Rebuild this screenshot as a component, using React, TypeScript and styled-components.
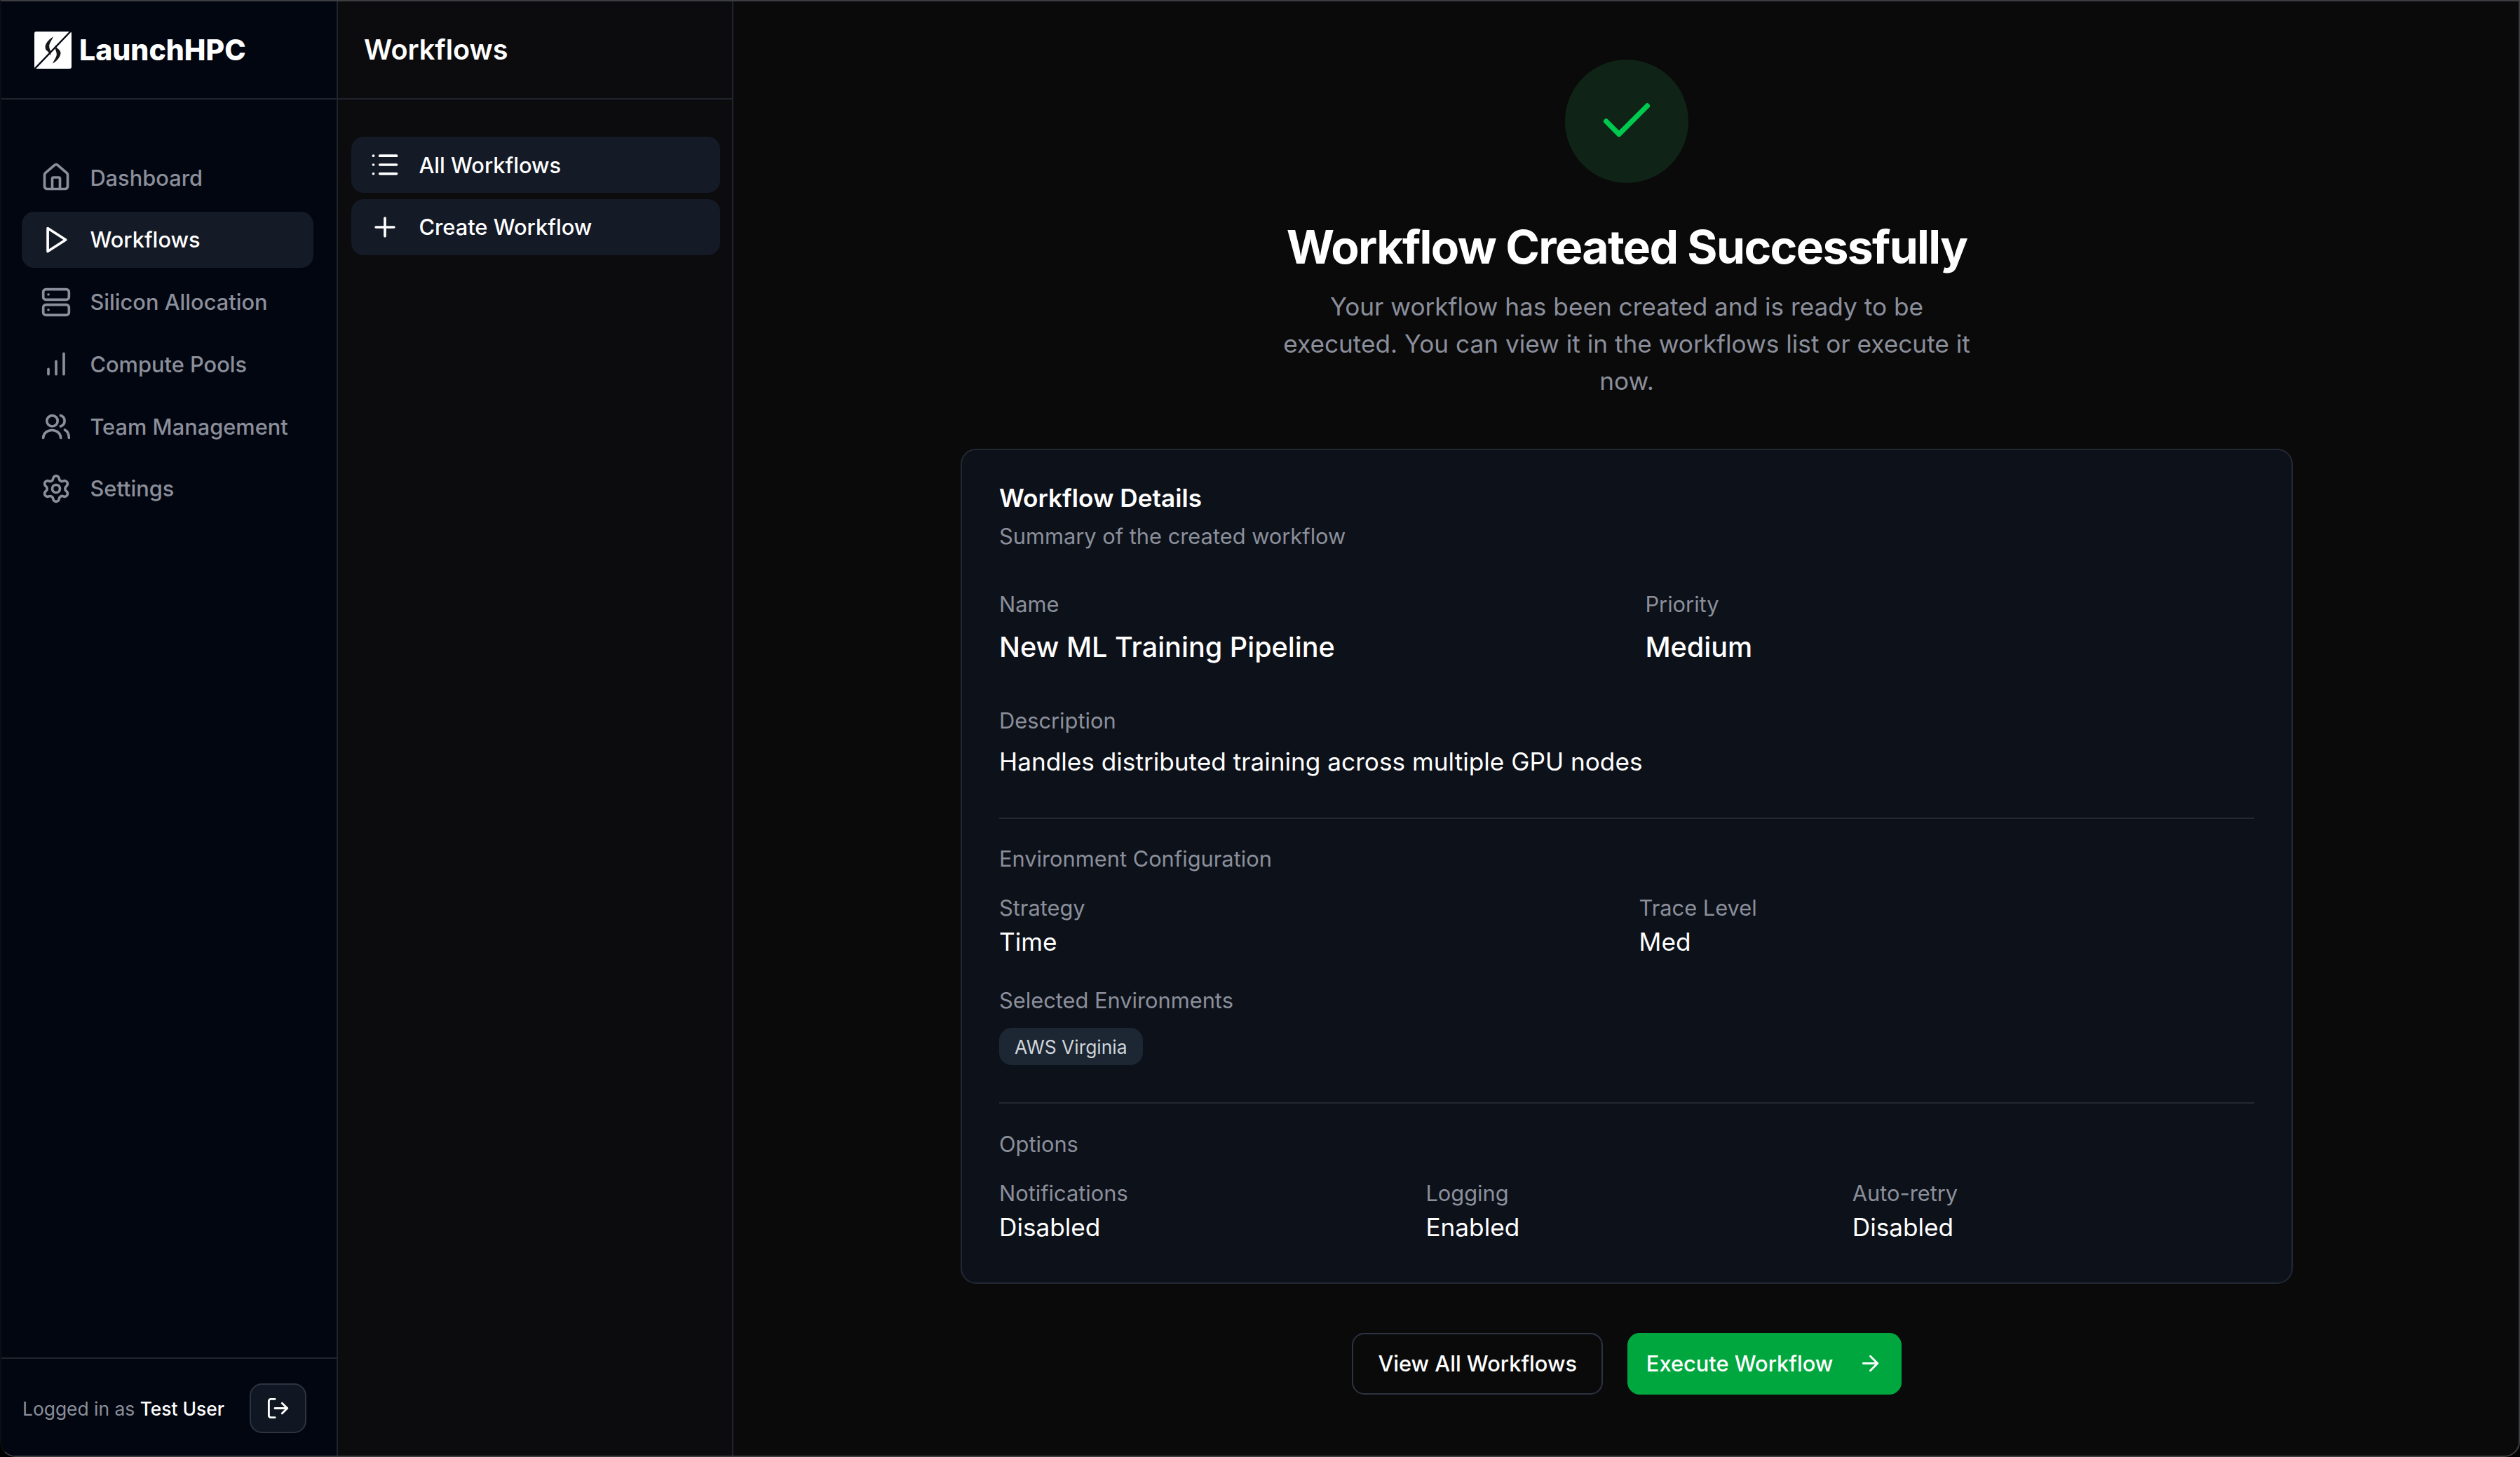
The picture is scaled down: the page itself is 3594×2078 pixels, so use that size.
import React, { FC } from 'react';
import styled, { createGlobalStyle } from 'styled-components';
import { ArrowRight, Check, House, List, LogOut, Plus, Server, Settings } from 'lucide-react';

const muted = '#8b8f9b';

const GlobalStyle = createGlobalStyle`
	html, body {
		margin: 0;
		padding: 0;
		background: #000;
	}
	* {
		box-sizing: border-box;
	}
	body {
		font-family: Inter, "Liberation Sans", sans-serif;
		color: #fff;
	}
`;

const Frame = styled.div`
	display: flex;
	width: 3594px;
	height: 2078px;
	overflow: hidden;
	border: 2px solid #3c3d40;
	border-left-color: #0c0e13;
	border-radius: 0 0 22px 22px;
	background: #0a0a0b;
`;

const Sidebar = styled.aside`
	display: flex;
	flex-direction: column;
	flex: none;
	width: 480px;
	background: #020610;
	border-right: 2px solid #1f242d;
`;

const Brand = styled.div`
	display: flex;
	align-items: center;
	gap: 11px;
	height: 140px;
	padding: 0 0 0 47px;
	border-bottom: 2px solid #1f242d;
`;

const BrandName = styled.span`
	font-size: 41px;
	font-weight: 800;
`;

const Nav = styled.nav`
	display: flex;
	flex: 1;
	flex-direction: column;
	gap: 8.8px;
	padding: 71px 33px 0 29px;
`;

const NavItem = styled.a<{ $active?: boolean }>`
	display: flex;
	align-items: center;
	gap: 26.4px;
	height: 80px;
	padding: 0 27px;
	border-radius: 17.6px;
	font-size: 30.8px;
	font-weight: 500;
	color: ${(p) => (p.$active ? '#fff' : muted)};
	background: ${(p) => (p.$active ? '#141a26' : 'transparent')};
`;

const UserBar = styled.div`
	display: flex;
	align-items: center;
	justify-content: space-between;
	height: 140px;
	padding: 0 43px 0 30px;
	border-top: 2px solid #1f242d;
`;

const UserText = styled.span`
	font-size: 26.4px;
	color: ${muted};
	margin-top: 4px;
`;

const UserName = styled.span`
	font-weight: 500;
	color: #fff;
`;

const IconButton = styled.button`
	display: flex;
	align-items: center;
	justify-content: center;
	width: 81px;
	height: 71px;
	margin-top: 2px;
	padding: 0;
	border: 2px solid #2c3341;
	border-radius: 17.6px;
	background: #101622;
	color: #fff;
`;

const SubPanel = styled.section`
	flex: none;
	width: 564px;
	background: #0c0c0e;
	border-right: 2px solid #1f242d;
`;

const SubHeader = styled.div`
	display: flex;
	align-items: center;
	height: 140px;
	padding: 0 0 0 37px;
	border-bottom: 2px solid #1f242d;
	font-size: 39.6px;
	font-weight: 600;
`;

const SubList = styled.div`
	display: flex;
	flex-direction: column;
	gap: 8.8px;
	padding: 53px 17px 0 19px;
`;

const SubItem = styled.a`
	display: flex;
	align-items: center;
	gap: 26.4px;
	height: 80px;
	padding: 0 26px;
	border-radius: 17.6px;
	background: #141a26;
	font-size: 30.8px;
	font-weight: 500;
`;

const Main = styled.main`
	display: flex;
	flex: 1;
	flex-direction: column;
	align-items: center;
	padding: 83px 0 0 2px;
`;

const SuccessBadge = styled.div`
	display: flex;
	align-items: center;
	justify-content: center;
	width: 176px;
	height: 176px;
	border-radius: 50%;
	background: #0f2416;
	color: #00c950;
`;

const Title = styled.h1`
	margin: 52px 0 0;
	font-size: 66px;
	font-weight: 700;
	line-height: 79.2px;
	letter-spacing: -1.65px;
`;

const Lead = styled.p`
	width: 985px;
	margin: 19px 0 0;
	font-size: 35.2px;
	line-height: 52.8px;
	text-align: center;
	color: ${muted};
`;

const Card = styled.div`
	width: 1900px;
	margin-top: 70px;
	padding: 51px 53px 52px;
	border: 2px solid #232833;
	border-radius: 22px;
	background: #0d1119;
`;

const CardTitle = styled.h2`
	margin: 0;
	font-size: 35.2px;
	font-weight: 600;
	line-height: 35.2px;
`;

const CardSub = styled.p`
	margin: 15px 0 0;
	font-size: 30.8px;
	line-height: 44px;
	color: ${muted};
`;

const Overview = styled.div`
	display: grid;
	grid-template-columns: 1fr 1fr;
	gap: 0 52.8px;
	margin-top: 53px;
`;

const Wide = styled.div`
	margin-top: 52px;
`;

const Label = styled.div`
	font-size: 30.8px;
	line-height: 44px;
	color: ${muted};
`;

const LeadValue = styled.div`
	margin-top: 9px;
	font-size: 39.6px;
	font-weight: 500;
	line-height: 61.6px;
`;

const Value = styled.div<{ $spaced?: boolean }>`
	margin-top: ${(p) => (p.$spaced ? '9.6px' : '0')};
	font-size: 35.2px;
	line-height: 52.8px;
`;

const Section = styled.div`
	margin-top: 53px;
	padding-top: 35.2px;
	border-top: 2px solid #232833;
`;

const Fields = styled.div<{ $columns: number }>`
	display: grid;
	grid-template-columns: repeat(${(p) => p.$columns}, 1fr);
	gap: 35.2px;
	margin-top: 26.4px;
`;

const Selected = styled.div`
	margin-top: 35.2px;
`;

const Chip = styled.span`
	display: inline-flex;
	align-items: center;
	height: 53px;
	margin-top: 17px;
	padding: 0 22px;
	border-radius: 17.6px;
	background: #1c2733;
	font-size: 26.4px;
	color: #d1d5db;
`;

const Actions = styled.div`
	display: flex;
	gap: 35.2px;
	margin-top: 70px;
`;

const Button = styled.button<{ $primary?: boolean }>`
	display: flex;
	align-items: center;
	gap: 36px;
	height: 88px;
	padding: ${(p) => (p.$primary ? '0 26.4px' : '0 35.2px')};
	border: ${(p) => (p.$primary ? 'none' : '2px solid #2c3341')};
	border-radius: 17.6px;
	background: ${(p) => (p.$primary ? '#00a63e' : '#0a0a0b')};
	color: #fff;
	font-family: inherit;
	font-size: 30.8px;
	font-weight: 500;
`;

const navIcon = { size: 44, strokeWidth: 2 };

// these three differ from the stock lucide drawings, so they are drawn here
const PlayIcon: FC = () => (
	<svg width="44" height="44" viewBox="0 0 24 24" fill="none" stroke="currentColor" strokeWidth="2" strokeLinejoin="round">
		<polygon points="5.5 3 19.5 12 5.5 21" />
	</svg>
);

const BarsIcon: FC = () => (
	<svg width="44" height="44" viewBox="0 0 24 24" fill="none" stroke="currentColor" strokeWidth="2" strokeLinecap="round">
		<path d="M12 20V10M18 20V4M6 20v-4" />
	</svg>
);

const TeamIcon: FC = () => (
	<svg width="44" height="44" viewBox="0 0 24 24" fill="none" stroke="currentColor" strokeWidth="2" strokeLinecap="round">
		<circle cx="9" cy="7.8" r="4.2" />
		<path d="M2 21a6.8 6 0 0 1 13.6 0" />
		<path d="M15.5 3.6a4.4 4.4 0 0 1 0 8.4" />
		<path d="M18.8 14.8c2 1 3.2 3.2 3.2 6.2" />
	</svg>
);

const Logo: FC = () => (
	<svg width="53" height="53" viewBox="15 15 160 160">
		<rect x="15" y="15" width="160" height="160" rx="8" fill="#fff" />
		<path d="M175 10 L18 174" stroke="#020610" strokeWidth="7" fill="none" />
		<path
			d="M96 37 C76 50 60 68 62 85 C64 100 80 100 85 118 C90 98 75 88 80 70 C84 58 92 50 96 37Z"
			fill="#17171a"
		/>
		<path
			d="M94 153 C114 140 130 122 128 105 C126 90 110 90 105 72 C100 92 115 102 110 120 C106 132 98 140 94 153Z"
			fill="#17171a"
		/>
	</svg>
);

const App: FC = () => (
	<>
		<GlobalStyle />
		<Frame>
			<Sidebar>
				<Brand>
					<Logo />
					<BrandName>LaunchHPC</BrandName>
				</Brand>
				<Nav>
					<NavItem><House {...navIcon} />Dashboard</NavItem>
					<NavItem $active><PlayIcon />Workflows</NavItem>
					<NavItem><Server {...navIcon} />Silicon Allocation</NavItem>
					<NavItem><BarsIcon />Compute Pools</NavItem>
					<NavItem><TeamIcon />Team Management</NavItem>
					<NavItem><Settings {...navIcon} />Settings</NavItem>
				</Nav>
				<UserBar>
					<UserText>Logged in as <UserName>Test User</UserName></UserText>
					<IconButton><LogOut size={35} /></IconButton>
				</UserBar>
			</Sidebar>
			<SubPanel>
				<SubHeader>Workflows</SubHeader>
				<SubList>
					<SubItem><List {...navIcon} />All Workflows</SubItem>
					<SubItem><Plus {...navIcon} />Create Workflow</SubItem>
				</SubList>
			</SubPanel>
			<Main>
				<SuccessBadge><Check size={88} /></SuccessBadge>
				<Title>Workflow Created Successfully</Title>
				<Lead>
					Your workflow has been created and is ready to be executed. You can view it in the workflows list or
					execute it now.
				</Lead>
				<Card>
					<CardTitle>Workflow Details</CardTitle>
					<CardSub>Summary of the created workflow</CardSub>
					<Overview>
						<div>
							<Label>Name</Label>
							<LeadValue>New ML Training Pipeline</LeadValue>
						</div>
						<div>
							<Label>Priority</Label>
							<LeadValue>Medium</LeadValue>
						</div>
					</Overview>
					<Wide>
						<Label>Description</Label>
						<Value $spaced>Handles distributed training across multiple GPU nodes</Value>
					</Wide>
					<Section>
						<Label>Environment Configuration</Label>
						<Fields $columns={2}>
							<div>
								<Label>Strategy</Label>
								<Value>Time</Value>
							</div>
							<div>
								<Label>Trace Level</Label>
								<Value>Med</Value>
							</div>
						</Fields>
						<Selected>
							<Label>Selected Environments</Label>
							<Chip>AWS Virginia</Chip>
						</Selected>
					</Section>
					<Section>
						<Label>Options</Label>
						<Fields $columns={3}>
							<div>
								<Label>Notifications</Label>
								<Value>Disabled</Value>
							</div>
							<div>
								<Label>Logging</Label>
								<Value>Enabled</Value>
							</div>
							<div>
								<Label>Auto-retry</Label>
								<Value>Disabled</Value>
							</div>
						</Fields>
					</Section>
				</Card>
				<Actions>
					<Button>View All Workflows</Button>
					<Button $primary>Execute Workflow<ArrowRight size={35} /></Button>
				</Actions>
			</Main>
		</Frame>
	</>
);

export default App;
